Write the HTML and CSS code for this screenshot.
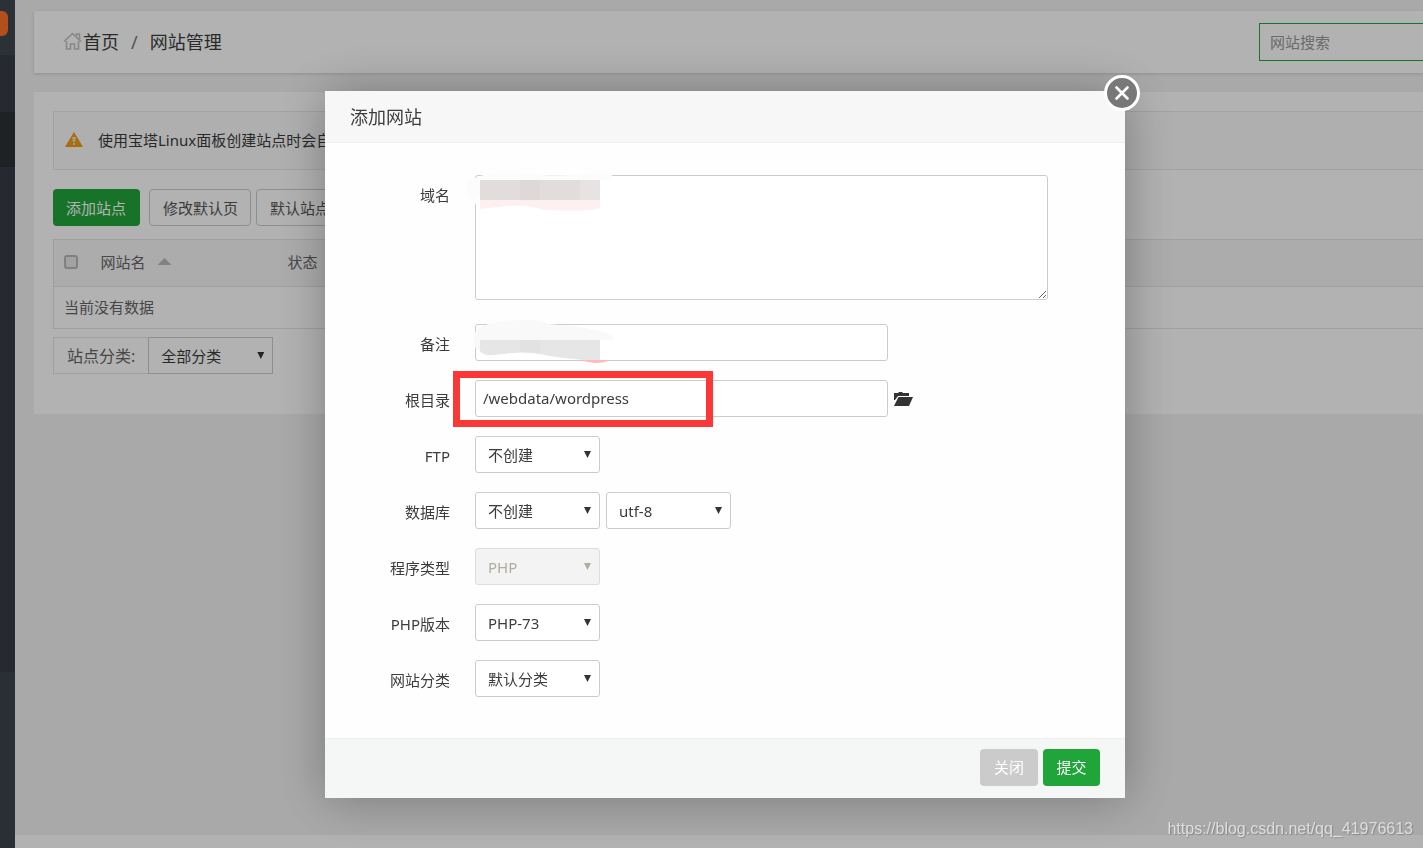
FILE: index.html
```html
<!DOCTYPE html>
<html lang="zh-CN">
<head>
<meta charset="utf-8">
<title>网站管理</title>
<link rel="stylesheet" href="styles.css">
</head>
<body>
<div class="app">
  <aside class="sidebar">
    <div class="side-top"><span class="badge"></span></div>
    <div class="side-menu"><div class="side-active"></div></div>
  </aside>
  <div class="page">
    <main class="content">
      <header class="topbar">
        <nav class="crumbs">
          <svg class="home" viewBox="0 0 19 20" width="19" height="20"><path d="M1 9.500 9.500 1.500 18 9.500M13.500 4V2h3v5M3.500 9v8h4v-5h4v5h4V9" fill="none" stroke="#c2c2c2" stroke-width="1.600"/></svg>
          <a href="#">首页</a><span class="sep">/</span><a href="#">网站管理</a>
        </nav>
        <input class="search" type="text" placeholder="网站搜索" aria-label="网站搜索">
      </header>
      <section class="panel">
        <div class="notice">
          <svg viewBox="0 0 18 16" width="18" height="16"><path d="M9 0 18 15H0z" fill="#f39c12"/><path d="M7 5h4l-1 5H8zM8 11h2v2H8z" fill="#e8dfd0"/></svg>
          <span>使用宝塔Linux面板创建站点时会自</span>
        </div>
        <div class="actions">
          <button class="btn btn-green first">添加站点</button>
          <button class="btn btn-line">修改默认页</button>
          <button class="btn btn-line">默认站点</button>
        </div>
        <table class="sites">
          <thead><tr>
            <th class="c-check"><input type="checkbox" aria-label="全选"></th>
            <th class="c-name">网站名<span class="sort"></span></th>
            <th>状态</th>
          </tr></thead>
          <tbody><tr><td colspan="3">当前没有数据</td></tr></tbody>
        </table>
        <div class="filter">
          <label for="cat">站点分类:</label>
          <span class="pick"><select id="cat"><option>全部分类</option></select></span>
        </div>
      </section>
    </main>
    <footer class="page-foot"></footer>
  </div>
</div>

<div class="mask">
  <form class="dialog">
    <button class="close" type="button" aria-label="关闭窗口"><svg viewBox="0 0 36 36" width="36" height="36"><circle cx="18" cy="18" r="16.500" fill="#787878" stroke="#fff" stroke-width="3"/><path d="m12.500 12.500 11 11m0-11-11 11" stroke="#fff" stroke-width="2.600" stroke-linecap="round"/></svg></button>
    <h2 class="dialog-title">添加网站</h2>
    <div class="dialog-body">
      <div class="row tall"><label for="domain">域名</label>
        <div class="field"><textarea id="domain"></textarea>
          <svg class="smudge" viewBox="0 0 160 50" width="160" height="50"><path d="M16 8Q30 1 60 3q30 4 70 1 15-5 22 1v5H140V28H16v6Q4 28 5 18q1-9 11-10z" fill="#fcfcfc"/><path d="M20 30h120v8q-10 4-55 2-26-7-46-3l-19 2z" fill="#fdf0f0"/><path d="M20 10h120v20H20z" fill="#e2dddd"/><path d="M60 10h20v20H60z" fill="#dfd8d8"/><path d="M120 10h20v20h-20z" fill="#e7e3e3"/></svg>
        </div></div>
      <div class="row"><label for="memo">备注</label>
        <div class="field"><input id="memo" class="text" type="text">
          <svg class="smudge" viewBox="0 0 160 50" width="160" height="50"><path d="M14 18Q14 5 45 2q34-3 43 3 62 4 67 16H20v12q-9-6-6-15z" fill="#f9f9f9"/><path d="M20 21h120v20q-20 1-50-4-20-5-38-3l-18 2q-11 1-14-4z" fill="#e6e6e6"/><path d="M60 21h20v13l-20-1z" fill="#e2e2e2"/><path d="M119 41h31q-5 3-15 3-8-1-16-3z" fill="#ffb9bb"/></svg>
        </div></div>
      <div class="row"><label for="path">根目录</label>
        <div class="field"><input id="path" class="text" type="text" value="/webdata/wordpress"><span class="highlight"></span>
          <button class="folder" type="button" aria-label="选择目录"><svg viewBox="0 0 19 15" width="19" height="15"><path d="M0 9V2h4l1-1h3l1 1h6v3H4L1 9z" fill="#333"/><path d="M4.500 6H19l-4 9H0z" fill="#333"/></svg></button>
        </div></div>
      <div class="row"><label for="ftp">FTP</label>
        <div class="field"><span class="pick"><select id="ftp"><option>不创建</option></select></span></div></div>
      <div class="row"><label for="db">数据库</label>
        <div class="field"><span class="pick"><select id="db"><option>不创建</option></select></span><span class="pick"><select aria-label="编码"><option>utf-8</option></select></span></div></div>
      <div class="row"><label for="type">程序类型</label>
        <div class="field"><span class="pick off"><select id="type" disabled><option>PHP</option></select></span></div></div>
      <div class="row"><label for="ver">PHP版本</label>
        <div class="field"><span class="pick"><select id="ver"><option>PHP-73</option></select></span></div></div>
      <div class="row"><label for="group">网站分类</label>
        <div class="field"><span class="pick"><select id="group"><option>默认分类</option></select></span></div></div>
    </div>
    <div class="dialog-foot">
      <button class="btn btn-gray" type="button">关闭</button>
      <button class="btn btn-green" type="button">提交</button>
    </div>
  </form>
</div>
<div class="watermark">https://blog.csdn.net/qq_41976613</div>
</body>
</html>
```
FILE: styles.css
```css
* { box-sizing: border-box; }
body {
  margin: 0;
  background: #f2f2f2;
  color: #3c3c3c;
  font: 15px/20px "Noto Sans", "Noto Sans CJK SC", sans-serif;
  overflow: hidden;
}
button, input, select, textarea { font: inherit; color: inherit; margin: 0; }
a { color: inherit; text-decoration: none; }

.app { display: flex; min-height: 100vh; }
.sidebar { width: 15px; flex: none; background: #3d424e; }
.side-top { height: 55px; padding-top: 11px; background: #40454f; }
.badge { display: block; width: 8px; height: 25px; border-radius: 0 6px 6px 0; background: #ff7228; }
.side-menu { height: 617px; padding-top: 57px; background: #373c47; }
.side-active { height: 55px; background: #2d3136; }

.page { flex: 1; display: flex; flex-direction: column; min-width: 0; }
.content { flex: 1; padding: 11px 0 0 19px; }
.page-foot { height: 13px; background: #fff; }

.topbar {
  display: flex; align-items: center; justify-content: space-between;
  height: 62px; padding-left: 29px;
  background: #fff; box-shadow: 0 1px 3px rgba(0, 0, 0, .15);
}
.crumbs { display: flex; align-items: center; font-size: 18px; }
.home { margin-right: 1px; }
.sep { margin: 0 12px; color: #777; }
.search {
  width: 164px; height: 38px; padding: 0 10px;
  border: 1px solid #20a53a; border-right: 0; border-radius: 0; background: #fff;
}
.search::placeholder { color: #999; opacity: 1; }

.panel { margin-top: 19px; padding: 19px 0 40px 19px; background: #fff; }
.notice {
  display: flex; align-items: center; gap: 15px;
  height: 59px; padding: 0 0 2px 11px;
  border: 1px solid #e8e8e8; border-right: 0; background: #fbfbfb;
}
.actions { display: flex; gap: 5px; margin: 19px 0 13px; }
.btn { height: 37px; padding: 0 13px; border: 0; border-radius: 4px; }
.btn-green { background: #20a53a; color: #fff; }
.btn-line { padding: 0 13px; border: 1px solid #ccc; background: #fff; color: #555; }
.btn-line:nth-child(2) { padding: 0 12px 0 13px; }
.btn-gray { background: #cbcbcb; color: #fff; }
.btn.first { margin-right: 4px; padding-right: 14px; }

.sites {
  width: 100%; border-collapse: collapse;
  border: 1px solid #e4e4e4; border-right: 0; color: #666; text-align: left;
}
.sites th { height: 47px; padding: 0 0 2px; background: #f6f6f6; font-weight: 400; }
.sites td { height: 42px; padding: 0 10px 2px; border-top: 1px solid #e4e4e4; }
.sites .c-check { width: 47px; padding-left: 10px; }
.c-name { width: 187px; }
.c-check input {
  appearance: none; display: block; width: 14px; height: 14px;
  border: 2px solid #b8b8b8; border-radius: 3px; background: #e9e9e9;
}
.sort {
  display: inline-block; width: 14px; height: 7px; margin: 0 0 3px 12px;
  background: #bbb; clip-path: polygon(50% 0, 100% 100%, 0 100%);
}

.filter { display: flex; height: 37px; margin-top: 8px; }
.filter label {
  padding: 0 13px; border: 1px solid #e4e4e4; border-right: 0;
  color: #666; font-size: 16px; line-height: 36px;
}
.pick { position: relative; display: block; width: 125px; height: 37px; }
.pick select {
  appearance: none; width: 100%; height: 100%; padding: 0 12px;
  border: 1px solid #ccc; border-radius: 3px; background: #fff; opacity: 1;
}
.pick::after {
  content: ""; position: absolute; right: 9px; top: 15px; width: 7px; height: 7px;
  background: #333; clip-path: polygon(0 0, 100% 0, 50% 100%); pointer-events: none;
}
.filter select { border-radius: 0; }
.pick.off select { background: #f3f3f3; border-color: #ddd; color: #b0ad9f; }
.pick.off::after { background: #b0ad9f; }

.mask {
  position: fixed; inset: 0;
  display: flex; justify-content: center; align-items: flex-start;
  padding: 91px 0 0 27px; background: rgba(0, 0, 0, .3);
}
.dialog {
  position: relative; width: 800px; max-width: 100%;
  background: #fefefe; border-radius: 2px; box-shadow: 1px 1px 50px rgba(0, 0, 0, .3);
}
.close { position: absolute; right: -15px; top: -16px; padding: 0; border: 0; background: none; line-height: 0; }
.dialog-title {
  margin: 0; padding: 1px 25px 0; border-bottom: 1px solid #eee; background: #f7f7f7;
  font-size: 18px; font-weight: 400; line-height: 50px;
}
.dialog-body { display: flex; flex-direction: column; gap: 17px; padding: 32px 25px 39px 0; }
.row { display: flex; align-items: flex-start; gap: 25px; }
.row > label { width: 125px; padding-top: 2px; text-align: right; line-height: 37px; }
.tall { padding-bottom: 7px; }
.field { position: relative; display: flex; align-items: center; gap: 6px; }
textarea { display: block; width: 573px; height: 125px; border: 1px solid #ccc; border-radius: 3px; background: #fff; }
.text { width: 413px; height: 37px; padding: 0 7px 2px; border: 1px solid #ccc; border-radius: 3px; background: #fff; }
.smudge { position: absolute; left: -15px; top: -5px; }
.highlight { position: absolute; left: -22px; top: -9px; width: 260px; height: 56px; border: 7px solid #fb3737; }
.folder { padding: 0; border: 0; background: none; line-height: 0; }
.dialog-foot {
  display: flex; justify-content: flex-end; gap: 5px;
  padding: 10px 25px 12px; border-top: 1px solid #edf1f0; background: #f4f7f6;
}
.dialog-foot .btn { width: 58px; padding: 0 0 2px; }
.dialog-foot .btn-green { width: 57px; }

.watermark {
  position: fixed; right: 10px; bottom: 9px;
  color: #dedede; font: 16px/20px "Liberation Sans", sans-serif;
  text-shadow: 1px 1px 1px rgba(0, 0, 0, .2);
}
```
